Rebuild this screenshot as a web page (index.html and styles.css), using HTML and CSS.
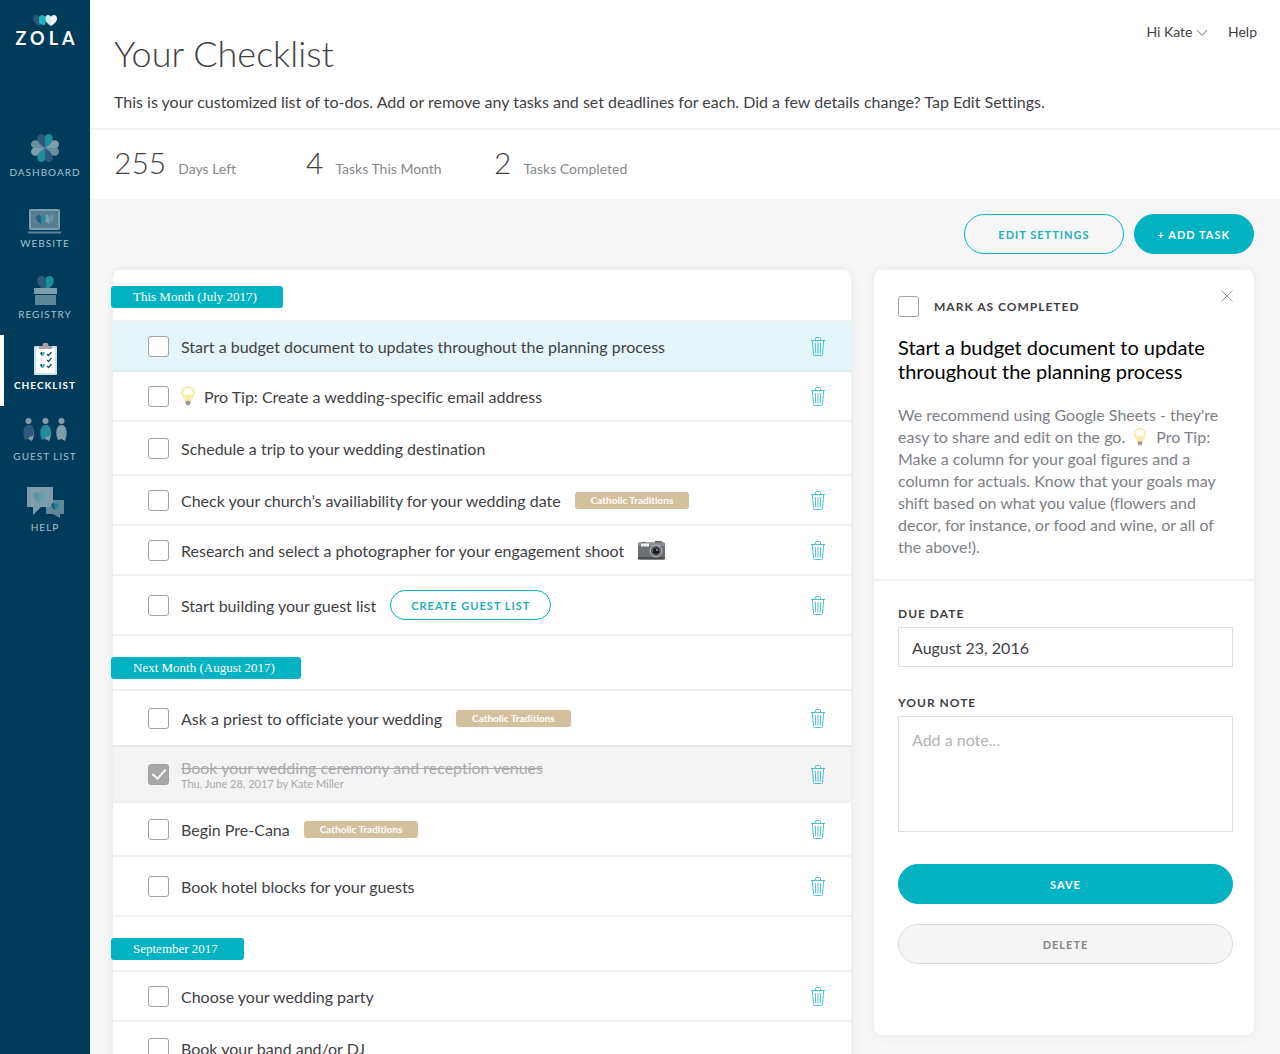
FILE: index.html
```html
<!DOCTYPE html>
<html lang="en">
<head>
    <meta charset="UTF-8">
    <meta name="viewport" content="width=device-width, initial-scale=1.0">
    <title>Your Checklist</title>
    <link rel="stylesheet" href="styles.css">
</head>
<body>
<svg class="sprite" aria-hidden="true">
    <symbol id="trash" viewBox="0 0 14 19">
        <path d="M0 3.500h14M4.500 3V1.500q0-1 1-1h3q1 0 1 1V3M1.300 3.500l1.200 14q.1 1 1 1h7q.9 0 1-1l1.200-14M4.300 6l.5 10.500M7 6v10.500M9.700 6l-.5 10.500" fill="none" stroke="#35bccb" stroke-width=".9"/>
    </symbol>
    <symbol id="bulb" viewBox="0 0 14 20">
        <path d="M7 .6C3.300.600.700 3.300.700 6.700c0 3.300 2.800 4.300 3.600 8.300h5.400c.8-4 3.600-5 3.600-8.300C13.300 3.300 10.700.600 7 .600z" fill="#fbf4b8" stroke="#eadf98" stroke-width=".8"/>
        <path d="M7 2C4.500 2 2.500 3.900 2.500 6.200 2.500 8 4.400 9.500 7 9.500s4.500-1.500 4.500-3.300C11.500 3.900 9.500 2 7 2z" fill="#fffef6"/>
        <path d="M5.500 8.500L6.300 15h1.400l.8-6.500" fill="none" stroke="#f3d977" stroke-width=".7"/>
        <path d="M4.500 15h5v2.700L8.300 19.500H5.700L4.500 17.700z" fill="#b9b6b2"/>
        <path d="M4.600 16.200h4.800M5 17.800h4" stroke="#77726d" stroke-width=".7"/>
    </symbol>
    <symbol id="heart" viewBox="0 0 20 18">
        <path d="M10 18C5 14.500 0 11 0 5.500 0 2.300 2.300 0 5.200 0 7.300 0 9.200 1.200 10 3z" fill="var(--left)"/>
        <path d="M10 18c5-3.500 10-7 10-12.500C20 2.300 17.700 0 14.800 0 12.700 0 10.800 1.200 10 3z" fill="var(--right)"/>
    </symbol>
</svg>

<div class="layout">
    <div class="sidebar">
        <a class="logo" href="#">
            <svg width="24" height="11" viewBox="0 0 24 11">
                <use class="heart-navy" href="#heart" x="0" y="0" width="12" height="11"/>
                <use class="heart-light" href="#heart" x="12" y="0" width="12" height="11"/>
                <path d="M6 2C7.500-.5 11-.3 12.500 2v7L11 10.500 6 8z" fill="#1fb5bd"/>
            </svg>
            <span>ZOLA</span>
        </a>
        <ul class="menu">
            <li><a href="#">
                <svg width="44" height="34" viewBox="0 0 44 34">
                    <g transform="translate(22 18)">
                        <use class="heart-grey" href="#heart" x="-8" y="-14" width="16" height="14" transform="rotate(90)"/>
                        <use class="heart-grey" href="#heart" x="-8" y="-14" width="16" height="14" transform="rotate(270)"/>
                        <use class="heart-dim" href="#heart" x="-8" y="-14" width="16" height="14"/>
                        <use class="heart-dim" href="#heart" x="-8" y="-14" width="16" height="14" transform="rotate(180)"/>
                    </g>
                </svg>
                <span>DASHBOARD</span>
            </a></li>
            <li><a href="#">
                <svg width="44" height="34" viewBox="0 0 44 34">
                    <rect x="6" y="8" width="31" height="21" rx="2" fill="#7d9dac"/>
                    <rect x="8" y="10" width="27" height="17" fill="#567e92"/>
                    <use class="heart-grey" href="#heart" x="21" y="14" width="10" height="9"/>
                    <use class="heart-dim" href="#heart" x="13" y="14" width="10" height="9"/>
                    <path d="M5 30.500h33v1q0 1-1 1H6q-1 0-1-1z" fill="#5f8799"/>
                </svg>
                <span>WEBSITE</span>
            </a></li>
            <li><a href="#">
                <svg width="44" height="34" viewBox="0 0 44 34">
                    <use class="heart-dim" href="#heart" x="14" y="4" width="17" height="15"/>
                    <rect x="11" y="16" width="23" height="6" fill="#7d9dac"/>
                    <rect x="12" y="23" width="21" height="10" fill="#5f8799"/>
                </svg>
                <span>REGISTRY</span>
            </a></li>
            <li class="active"><a href="#">
                <svg width="44" height="34" viewBox="0 0 44 34">
                    <g transform="translate(0 -2)">
                        <rect x="11" y="5" width="23" height="29" rx="1" fill="#c6e6ed"/>
                        <rect x="13" y="7" width="19" height="25" fill="#fff"/>
                        <path d="M16 5h3.500a3 3.500 0 0 1 6 0H29v3H16z" fill="#a9a2a8"/>
                        <use class="heart-full" href="#heart" x="17" y="11" width="5" height="4"/>
                        <use class="heart-light" href="#heart" x="17" y="17" width="5" height="4"/>
                        <use class="heart-full" href="#heart" x="17" y="23" width="5" height="4"/>
                        <path d="M24 13l1.500 1.500L28.500 11M24 19l1.500 1.500L28.500 17M24 25l1.500 1.500L28.500 23" fill="none" stroke="#164863" stroke-width="1.200"/>
                    </g>
                </svg>
                <span>CHECKLIST</span>
            </a></li>
            <li><a href="#">
                <svg width="44" height="34" viewBox="0 0 44 34">
                    <circle cx="5.500" cy="7" r="3" fill="#7d9dac"/>
                    <circle cx="22.500" cy="7" r="3" fill="#7d9dac"/>
                    <circle cx="38.500" cy="7" r="3" fill="#7d9dac"/>
                    <path d="M5 25l4 2C13 20 11 11 5.500 11z" fill="#7d9dac"/>
                    <path d="M2 26c-3-6-2-15 3.500-15s6 8 4.500 11q-4 0-5 3z" fill="#2b5b7c"/>
                    <path d="M22 25l4 2c4-7 2-16-3.500-16z" fill="#7d9dac"/>
                    <path d="M19 26c-3-6-2-15 3.500-15s6 8 4.500 11q-4 0-5 3z" fill="#1f8c98"/>
                    <path d="M35 26c-3-6-2-15 3.500-15S45 20 42 27l-3.500-2z" fill="#7d9dac"/>
                </svg>
                <span>GUEST LIST</span>
            </a></li>
            <li><a href="#">
                <svg width="44" height="34" viewBox="0 0 44 34">
                    <path d="M23 15h18v14h-4v4l-7-4h-7z" fill="#5f8799"/>
                    <path d="M4 2h26v20H18l-8 8v-8H4z" fill="#7d9dac"/>
                    <use class="heart-pale" href="#heart" x="10" y="7" width="13" height="11"/>
                    <use class="heart-dim" href="#heart" x="28" y="18" width="8" height="7"/>
                </svg>
                <span>HELP</span>
            </a></li>
        </ul>
    </div>

    <div class="main">
        <div class="header">
            <div>
                <h1>Your Checklist</h1>
                <p>This is your customized list of to-dos. Add or remove any tasks and set deadlines for each. Did a few details change? Tap Edit Settings.</p>
            </div>
            <div class="user">
                <a href="#">Hi Kate
                    <svg width="12" height="8" viewBox="0 0 12 8"><path d="M1 1l5 5.500L11 1" fill="none" stroke="#777" stroke-width="1"/></svg>
                </a>
                <a href="#">Help</a>
            </div>
        </div>
        <div class="stats">
            <div><b>255</b><span>Days Left</span></div>
            <div><b>4</b><span>Tasks This Month</span></div>
            <div><b>2</b><span>Tasks Completed</span></div>
        </div>

        <div class="content">
            <div class="actions">
                <button class="btn outline">EDIT SETTINGS</button>
                <button class="btn solid">+ ADD TASK</button>
            </div>
            <div class="columns">
                <div class="card list">
                    <div class="month"><h2>This Month (July 2017)</h2></div>
                    <div class="task selected">
                        <input type="checkbox" id="t1">
                        <label for="t1">Start a budget document to updates throughout the planning process</label>
                        <button class="trash" aria-label="Delete task"><svg width="14" height="19"><use href="#trash"/></svg></button>
                    </div>
                    <div class="task">
                        <input type="checkbox" id="t2">
                        <label for="t2"><svg class="bulb" width="14" height="20"><use href="#bulb"/></svg>Pro Tip: Create a wedding-specific email address</label>
                        <button class="trash" aria-label="Delete task"><svg width="14" height="19"><use href="#trash"/></svg></button>
                    </div>
                    <div class="task mid">
                        <input type="checkbox" id="t3">
                        <label for="t3">Schedule a trip to your wedding destination</label>
                    </div>
                    <div class="task">
                        <input type="checkbox" id="t4">
                        <label for="t4">Check your church’s availiability for your wedding date</label>
                        <span class="tag">Catholic Traditions</span>
                        <button class="trash" aria-label="Delete task"><svg width="14" height="19"><use href="#trash"/></svg></button>
                    </div>
                    <div class="task">
                        <input type="checkbox" id="t5">
                        <label for="t5">Research and select a photographer for your engagement shoot</label>
                        <svg class="camera" width="27" height="19" viewBox="0 0 27 19">
                            <path d="M3 1h5v1H3zM17 0h7v2h-7z" fill="#666"/>
                            <rect y="1.500" width="27" height="17" rx="1.500" fill="#6d6f71"/>
                            <path d="M0 3q0-1.500 1.500-1.500h24Q27 1.500 27 3v2H0z" fill="#8b8d8f"/>
                            <rect x="3" y="2.500" width="8" height="3" fill="#eee"/>
                            <path d="M0 16h27v1q0 1.500-1.500 1.500h-24Q0 18.500 0 17z" fill="#4c4e50"/>
                            <circle cx="18" cy="10" r="6.500" fill="#a9abad"/>
                            <circle cx="18" cy="10" r="5" fill="#54575a"/>
                            <circle cx="18" cy="10" r="3" fill="#15181c"/>
                            <circle cx="19" cy="9" r="1" fill="#8fa3b5"/>
                        </svg>
                        <button class="trash" aria-label="Delete task"><svg width="14" height="19"><use href="#trash"/></svg></button>
                    </div>
                    <div class="task tall">
                        <input type="checkbox" id="t6">
                        <label for="t6">Start building your guest list</label>
                        <button class="btn outline small">CREATE GUEST LIST</button>
                        <button class="trash" aria-label="Delete task"><svg width="14" height="19"><use href="#trash"/></svg></button>
                    </div>

                    <div class="month"><h2>Next Month (August 2017)</h2></div>
                    <div class="task big">
                        <input type="checkbox" id="t7">
                        <label for="t7">Ask a priest to officiate your wedding</label>
                        <span class="tag">Catholic Traditions</span>
                        <button class="trash" aria-label="Delete task"><svg width="14" height="19"><use href="#trash"/></svg></button>
                    </div>
                    <div class="task big done">
                        <input type="checkbox" id="t8" checked>
                        <label for="t8"><s>Book your wedding ceremony and reception venues</s><small>Thu, June 28, 2017 by Kate Miller</small></label>
                        <button class="trash" aria-label="Delete task"><svg width="14" height="19"><use href="#trash"/></svg></button>
                    </div>
                    <div class="task mid">
                        <input type="checkbox" id="t9">
                        <label for="t9">Begin Pre-Cana</label>
                        <span class="tag">Catholic Traditions</span>
                        <button class="trash" aria-label="Delete task"><svg width="14" height="19"><use href="#trash"/></svg></button>
                    </div>
                    <div class="task tall">
                        <input type="checkbox" id="t10">
                        <label for="t10">Book hotel blocks for your guests</label>
                        <button class="trash" aria-label="Delete task"><svg width="14" height="19"><use href="#trash"/></svg></button>
                    </div>

                    <div class="month"><h2>September 2017</h2></div>
                    <div class="task">
                        <input type="checkbox" id="t11">
                        <label for="t11">Choose your wedding party</label>
                        <button class="trash" aria-label="Delete task"><svg width="14" height="19"><use href="#trash"/></svg></button>
                    </div>
                    <div class="task mid">
                        <input type="checkbox" id="t12">
                        <label for="t12">Book your band and/or DJ</label>
                    </div>
                </div>

                <div class="card panel">
                    <div class="detail">
                        <div class="detail-top">
                            <div class="mark">
                                <input type="checkbox" id="mark">
                                <label class="caps" for="mark">MARK AS COMPLETED</label>
                            </div>
                            <button class="close" aria-label="Close"><svg width="12" height="12" viewBox="0 0 12 12"><path d="M.5.500l11 11M11.500.500l-11 11" stroke="#999" stroke-width="1"/></svg></button>
                        </div>
                        <h3>Start a budget document to update throughout the planning process</h3>
                        <p>We recommend using Google Sheets - they're easy to share and edit on the go. <svg class="bulb" width="14" height="20"><use href="#bulb"/></svg>Pro Tip: Make a column for your goal figures and a column for actuals. Know that your goals may shift based on what you value (flowers and decor, for instance, or food and wine, or all of the above!).</p>
                    </div>
                    <form class="form">
                        <label class="caps" for="due">DUE DATE</label>
                        <input type="text" id="due" value="August 23, 2016">
                        <label class="caps" for="note">YOUR NOTE</label>
                        <textarea id="note" placeholder="Add a note..."></textarea>
                        <button type="button" class="btn solid">SAVE</button>
                        <button type="button" class="btn grey">DELETE</button>
                    </form>
                </div>
            </div>
        </div>
    </div>
</div>
</body>
</html>
```
FILE: styles.css
```css
*{
    margin: 0;
    padding: 0;
    box-sizing: border-box;
}
body{
    font-family: Lato, "Liberation Sans", sans-serif;
    font-size: 16px;
    font-variant-ligatures: none;
    color: #3f4144;
    background: #f6f6f6;
}
a{
    color: inherit;
    text-decoration: none;
}
button{
    font-family: inherit;
    cursor: pointer;
}
.sprite{
    display: none;
}
.layout{
    display: flex;
    height: 100vh;
    overflow: hidden;
}

/* sidebar */
.sidebar{
    flex: none;
    width: 90px;
    background: #003b59;
}
.logo{
    display: flex;
    flex-direction: column;
    align-items: center;
    height: 122px;
    padding-top: 15px;
    color: #fff;
    font-size: 18px;
    font-weight: bold;
    line-height: 24px;
    letter-spacing: 4px;
}
.logo span{
    padding-left: 4px;
}
.menu{
    list-style: none;
}
.menu a{
    display: flex;
    flex-direction: column;
    align-items: center;
    height: 71px;
    padding-top: 8px;
    color: #a3c3d0;
    font-size: 10px;
    line-height: 16px;
    letter-spacing: 1px;
}
.menu .active a{
    color: #fff;
    font-weight: bold;
    border-left: 4px solid #fff;
    padding-right: 4px;
}
.heart-navy{
    --left: #2b5b7c;
    --right: #2b5b7c;
}
.heart-light{
    --left: #d3ebee;
    --right: #eef7f8;
}
.heart-dim{
    --left: #2b5b7c;
    --right: #1f8c98;
}
.heart-grey{
    --left: #7d9dac;
    --right: #6b90a1;
}
.heart-pale{
    --left: #5f94a5;
    --right: #6b9dac;
}
.heart-full{
    --left: #164863;
    --right: #1fb5bd;
}

/* header */
.main{
    flex: 1;
    min-width: 0;
}
.header{
    padding: 31px 23px 14px 24px;
    background: #fff;
    border-bottom: 2px solid #f1f1f1;
    position: relative;
}
.header h1{
    font-size: 36px;
    font-weight: 300;
    line-height: 44px;
}
.header p{
    margin-top: 15px;
    line-height: 24px;
}
.user{
    display: flex;
    gap: 20px;
    position: absolute;
    top: 22px;
    right: 23px;
    font-size: 14px;
    line-height: 20px;
}
.stats{
    display: grid;
    grid-template-columns: 192px 188px auto;
    align-items: center;
    height: 69px;
    padding: 0 0 5px 24px;
    background: #fff;
}
.stats b{
    margin-right: 12px;
    font-size: 30px;
    font-weight: 300;
}
.stats span{
    font-size: 14px;
    color: #86888b;
}

/* buttons */
.content{
    padding: 15px 26px 19px 23px;
}
.actions{
    display: flex;
    justify-content: flex-end;
    gap: 10px;
    margin-bottom: 16px;
}
.btn{
    height: 40px;
    padding: 0 23px;
    border: 1px solid #03b3c1;
    border-radius: 20px;
    font-size: 11px;
    font-weight: bold;
    letter-spacing: 1px;
}
.outline{
    padding: 0 33px;
    background: transparent;
    color: #1fb0bb;
}
.solid{
    background: #03b3c1;
    color: #fff;
}
.grey{
    background: #f5f5f5;
    border-color: #dcdcdc;
    color: #868686;
}
.small{
    height: 30px;
    margin-left: 14px;
    padding: 0 20px;
}

/* checklist */
.columns{
    display: flex;
    align-items: flex-start;
    gap: 23px;
}
.card{
    background: #fff;
    border-radius: 8px;
    box-shadow: 0 0 12px rgba(0,0,0,.07);
}
.list{
    flex: 1;
    min-width: 0;
}
.month{
    display: flex;
    align-items: center;
    height: 55px;
    padding-top: 10px;
    border-top: 2px solid #f1f1f1;
}
.month:first-child{
    height: 50px;
    padding-top: 4px;
    border-top: 0;
}
.month h2{
    margin-left: -2px;
    padding: 0 26px 0 22px;
    background: #03b3c1;
    border-radius: 3px;
    color: #fff;
    font-family: "Liberation Serif", serif;
    font-size: 13px;
    font-weight: normal;
    line-height: 22px;
}
.task{
    display: flex;
    align-items: center;
    height: 50px;
    padding: 0 26px 0 35px;
    border-top: 2px solid #f1f1f1;
}
.mid{
    height: 54px;
}
.big{
    height: 56px;
}
.tall{
    height: 60px;
}
.selected{
    background: #e4f6f9;
}
.selected + .task{
    border-color: #d9ecee;
}
.done{
    background: #f4f4f4;
    border-color: #e8e8e8;
    color: #a9a9ab;
}
.task label{
    margin-left: 12px;
}
.task s{
    display: block;
    line-height: 18px;
}
.task small{
    display: block;
    font-size: 11px;
    line-height: 13px;
}
input[type=checkbox]{
    flex: none;
    appearance: none;
    width: 21px;
    height: 21px;
    background: #fff;
    border: 1px solid #a2a2a5;
    border-radius: 3px;
}
input[type=checkbox]:checked{
    display: grid;
    place-items: center;
    background: #a7a7aa;
}
input[type=checkbox]:checked::before{
    content: "";
    width: 6px;
    height: 11px;
    margin-bottom: 3px;
    border: solid #fff;
    border-width: 0 2px 2px 0;
    transform: rotate(42deg);
}
.tag{
    margin-left: 14px;
    padding: 0 16px;
    background: #d5c09d;
    border-radius: 3px;
    color: #fff;
    font-size: 10px;
    font-weight: bold;
    line-height: 17px;
}
.camera{
    margin-left: 14px;
}
.bulb{
    margin-right: 9px;
    vertical-align: -3px;
}
.trash, .close{
    display: block;
    background: none;
    border: 0;
}
.trash{
    margin-left: auto;
}
.trash svg, .close svg{
    display: block;
}

/* task details */
.panel{
    flex: none;
    width: 380px;
    padding-bottom: 71px;
}
.detail{
    padding: 20px 21px 21px 24px;
    border-bottom: 2px solid #f1f1f1;
}
.detail-top{
    display: flex;
    justify-content: space-between;
    align-items: flex-start;
}
.mark{
    display: flex;
    align-items: center;
    gap: 15px;
    padding-top: 6px;
}
.caps{
    font-size: 12px;
    font-weight: bold;
    line-height: 14px;
    letter-spacing: 1px;
}
.detail h3{
    margin-top: 18px;
    color: #000;
    font-size: 20px;
    font-weight: normal;
    line-height: 24px;
}
.detail p{
    margin-top: 21px;
    color: #7d8087;
    line-height: 22px;
}
.detail .bulb{
    margin-left: 4px;
    height: 18px;
}
.form{
    display: flex;
    flex-direction: column;
    padding: 26px 21px 0 24px;
}
.form input, .form textarea{
    margin: 6px 0 29px;
    padding: 0 13px;
    height: 40px;
    border: 1px solid #dedede;
    color: inherit;
    font-family: inherit;
    font-size: 16px;
}
.form textarea{
    height: 116px;
    margin-bottom: 32px;
    padding: 13px;
    resize: none;
}
.form textarea::placeholder{
    color: #b3b3b3;
}
.form .btn + .btn{
    margin-top: 20px;
}
```
